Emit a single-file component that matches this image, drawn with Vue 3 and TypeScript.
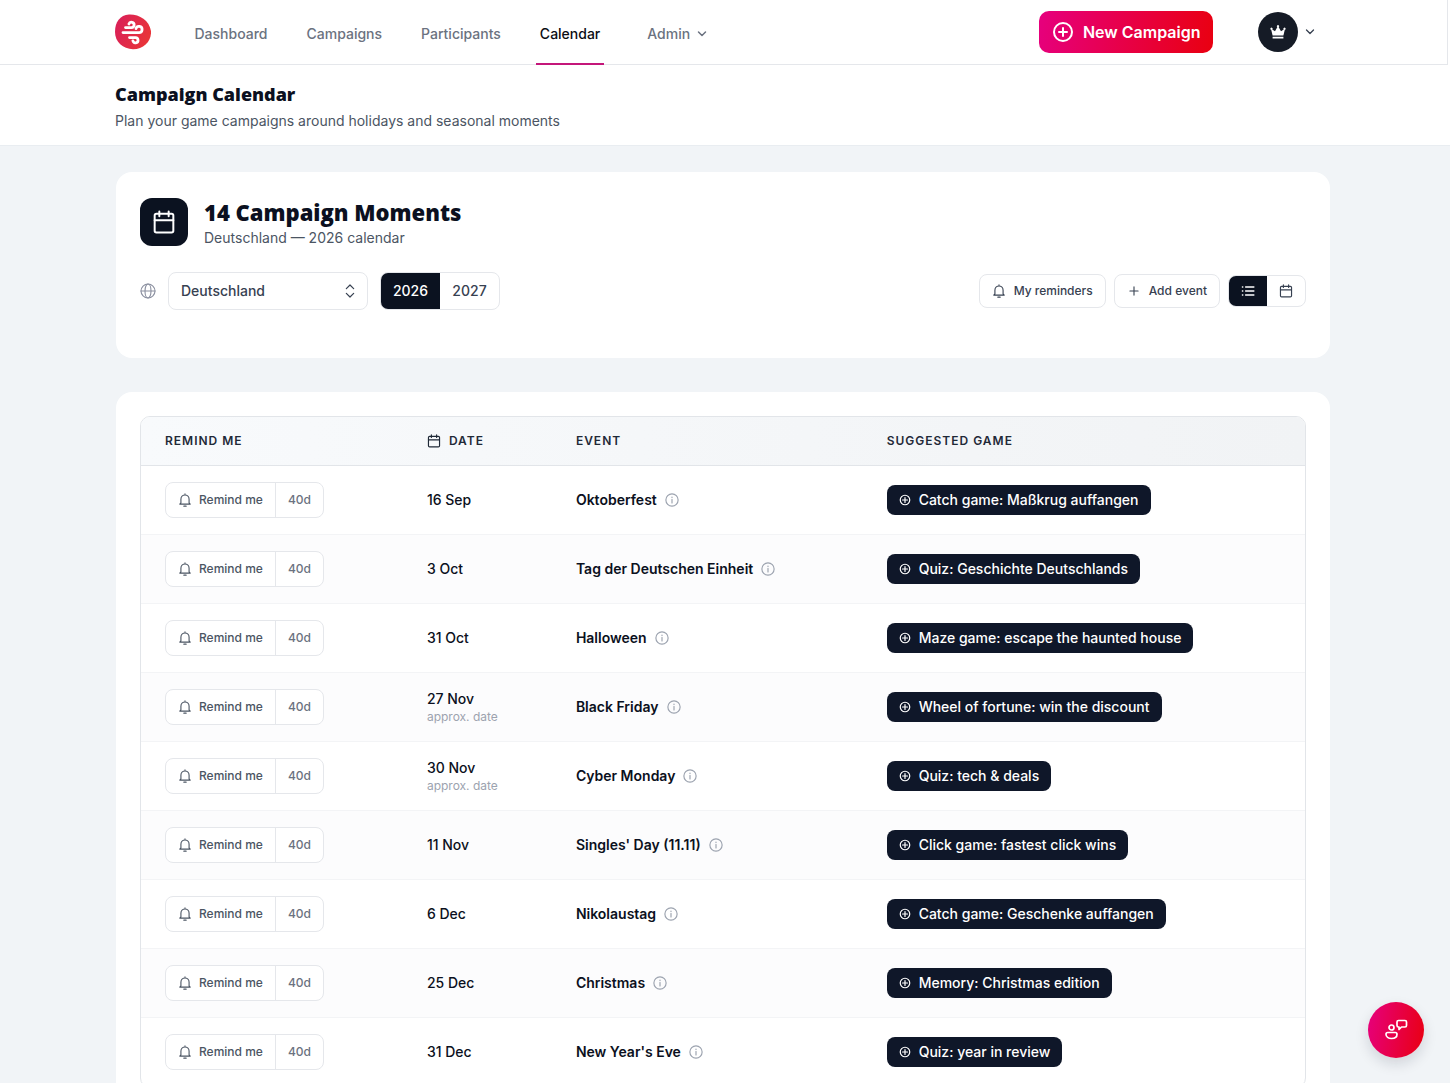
<script setup lang="ts">
import { ref } from 'vue'

interface Moment {
  date: string
  approx?: boolean
  name: string
  game: string
}

const navItems: string[] = ['Dashboard', 'Campaigns', 'Participants', 'Calendar']
const activeNav = 'Calendar'

const country = ref('Deutschland')
const years: number[] = [2026, 2027]
const year = ref(2026)
const view = ref<'list' | 'month'>('list')

const moments: Moment[] = [
  { date: '16 Sep', name: 'Oktoberfest', game: 'Catch game: Maßkrug auffangen' },
  { date: '3 Oct', name: 'Tag der Deutschen Einheit', game: 'Quiz: Geschichte Deutschlands' },
  { date: '31 Oct', name: 'Halloween', game: 'Maze game: escape the haunted house' },
  { date: '27 Nov', approx: true, name: 'Black Friday', game: 'Wheel of fortune: win the discount' },
  { date: '30 Nov', approx: true, name: 'Cyber Monday', game: 'Quiz: tech & deals' },
  { date: '11 Nov', name: "Singles' Day (11.11)", game: 'Click game: fastest click wins' },
  { date: '6 Dec', name: 'Nikolaustag', game: 'Catch game: Geschenke auffangen' },
  { date: '25 Dec', name: 'Christmas', game: 'Memory: Christmas edition' },
  { date: '31 Dec', name: "New Year's Eve", game: 'Quiz: year in review' },
]
</script>

<template>
  <div class="page">
    <header class="topbar">
      <div class="container topbar-inner">
        <a href="#" class="logo" aria-label="Home">
          <svg width="36" height="36" viewBox="0 0 36 36" fill="none">
            <defs>
              <linearGradient id="logo-fill" x1="0" y1="0" x2="1" y2="0.4">
                <stop offset="0" stop-color="#d81e5b" />
                <stop offset="1" stop-color="#e8343a" />
              </linearGradient>
            </defs>
            <path d="M14 .6C24 .2 34 6 36 17c.6 10-7 18-18 18.200C8 35 0 28 0 18 0 8 5 1.200 14 .6Z" fill="url(#logo-fill)" />
            <g stroke="#fff" stroke-width="2.800" stroke-linecap="round" stroke-linejoin="round">
              <path d="M10.500 13.600h6a2.700 2.700 0 1 0-2.600-3.600" />
              <path d="M8 18.600h16a3.100 3.100 0 1 0-3-4" />
              <path d="M14.500 23.600h6a2.600 2.600 0 1 1-2.600 3.200" />
            </g>
          </svg>
        </a>
        <nav class="nav">
          <a
            v-for="item in navItems"
            :key="item"
            href="#"
            class="nav-link"
            :class="{ active: item === activeNav }"
          >{{ item }}</a>
          <button type="button" class="nav-menu">
            Admin
            <svg class="stroke" width="12" height="12" viewBox="0 0 24 24" stroke-width="3"><path d="m5 8 7 7 7-7" /></svg>
          </button>
        </nav>
        <button type="button" class="new-campaign">
          <svg class="stroke" width="24" height="24" viewBox="0 0 24 24" stroke-width="2"><circle cx="12" cy="12" r="9" /><path d="M12 8v8M8 12h8" /></svg>
          New Campaign
        </button>
        <button type="button" class="account" aria-label="Account">
          <span class="avatar">
            <svg width="16" height="14" viewBox="0 0 16 14" fill="#fff"><path d="M2.600 10.600 1.200 4.800a1.100 1.100 0 1 1 1-.2L5 6.200l2.400-4.100a1.100 1.100 0 1 1 1.200 0L11 6.200l2.800-1.600a1.100 1.100 0 1 1 1 .2l-1.400 5.800ZM2.600 11.800h10.800v1.700H2.600Z" /></svg>
          </span>
          <svg class="stroke" width="12" height="12" viewBox="0 0 24 24" stroke-width="2.600"><path d="m5 8 7 7 7-7" /></svg>
        </button>
      </div>
    </header>

    <section class="page-head">
      <div class="container">
        <h1>Campaign Calendar</h1>
        <p>Plan your game campaigns around holidays and seasonal moments</p>
      </div>
    </section>

    <main class="container content">
      <section class="card summary">
        <div class="summary-head">
          <span class="summary-icon">
            <svg class="stroke" width="28" height="28" viewBox="0 0 24 24" stroke-width="1.700"><rect x="4" y="5" width="16" height="16" rx="1.500" /><path d="M4 10.500h16M8 3v4M16 3v4" /></svg>
          </span>
          <div>
            <h2>14 Campaign Moments</h2>
            <p>{{ country }} — {{ year }} calendar</p>
          </div>
        </div>
        <div class="toolbar">
          <label class="globe" for="country" aria-label="Country">
            <svg class="stroke" width="16" height="16" viewBox="0 0 24 24" stroke-width="1.700"><circle cx="12" cy="12" r="10.500" /><ellipse cx="12" cy="12" rx="4.500" ry="10.500" /><path d="M1.500 12h21" /></svg>
          </label>
          <div class="select">
            <select id="country" v-model="country">
              <option>Deutschland</option>
              <option>Österreich</option>
            </select>
            <svg class="stroke" width="16" height="16" viewBox="0 0 24 24" stroke-width="1.800"><path d="m6.500 8.500 5.500-5.500 5.500 5.500M6.500 15.500l5.500 5.500 5.500-5.500" /></svg>
          </div>
          <div class="years">
            <button
              v-for="y in years"
              :key="y"
              type="button"
              :class="{ on: y === year }"
              @click="year = y"
            >{{ y }}</button>
          </div>
          <div class="actions">
            <button type="button" class="action">
              <svg class="stroke" width="14" height="14" viewBox="0 0 24 24" stroke-width="1.900"><path d="M5 17V10.500a7 7 0 0 1 14 0V17l2 2H3ZM12 1.500v2M10 22.500h4" /></svg>
              My reminders
            </button>
            <button type="button" class="action">
              <svg class="stroke" width="14" height="14" viewBox="0 0 24 24" stroke-width="1.900"><path d="M12 5v14M5 12h14" /></svg>
              Add event
            </button>
            <div class="views">
              <button type="button" aria-label="List view" :class="{ on: view === 'list' }" @click="view = 'list'">
                <svg class="stroke" width="14" height="14" viewBox="0 0 24 24" stroke-width="2.600"><path d="M8 5h14M8 12h14M8 19h14M2.500 5h.5M2.500 12h.5M2.500 19h.5" /></svg>
              </button>
              <button type="button" aria-label="Calendar view" :class="{ on: view === 'month' }" @click="view = 'month'">
                <svg class="stroke" width="14" height="14" viewBox="0 0 24 24" stroke-width="2"><rect x="2.500" y="4" width="19" height="18" rx="2" /><path d="M2.500 10h19M7.500 1.500V6M16.500 1.500V6" /></svg>
              </button>
            </div>
          </div>
        </div>
      </section>

      <section class="card listing">
        <div class="table-wrap">
          <table>
            <colgroup>
              <col class="c-remind" />
              <col class="c-date" />
              <col class="c-event" />
              <col />
            </colgroup>
            <thead>
              <tr>
                <th scope="col">Remind me</th>
                <th scope="col">
                  <span class="th-date">
                    <svg class="stroke" width="14" height="14" viewBox="0 0 24 24" stroke-width="2"><rect x="2.500" y="4" width="19" height="18" rx="2" /><path d="M2.500 10h19M7.500 1.500V6M16.500 1.500V6" /></svg>
                    Date
                  </span>
                </th>
                <th scope="col">Event</th>
                <th scope="col">Suggested game</th>
              </tr>
            </thead>
            <tbody>
              <tr v-for="m in moments" :key="m.name">
                <td>
                  <div class="remind">
                    <button type="button" class="remind-main">
                      <svg class="stroke" width="14" height="14" viewBox="0 0 24 24" stroke-width="1.900"><path d="M5 17V10.500a7 7 0 0 1 14 0V17l2 2H3ZM12 1.500v2M10 22.500h4" /></svg>
                      Remind me
                    </button>
                    <button type="button" class="remind-days">40d</button>
                  </div>
                </td>
                <td>
                  <div class="date">{{ m.date }}</div>
                  <div v-if="m.approx" class="approx">approx. date</div>
                </td>
                <td>
                  <div class="event">
                    {{ m.name }}
                    <svg class="stroke" width="14" height="14" viewBox="0 0 24 24" stroke-width="2"><circle cx="12" cy="12" r="10.500" /><path d="M12 11v6M12 7v.5" /></svg>
                  </div>
                </td>
                <td>
                  <button type="button" class="game">
                    <svg class="stroke" width="12" height="12" viewBox="0 0 24 24" stroke-width="2.400"><circle cx="12" cy="12" r="9.500" /><path d="M12 7v10M7 12h10" /></svg>
                    {{ m.game }}
                  </button>
                </td>
              </tr>
            </tbody>
          </table>
        </div>
      </section>
    </main>

    <button type="button" class="fab" aria-label="Support chat">
      <svg class="stroke" width="24" height="24" viewBox="0 0 24 24" stroke-width="1.700"><circle cx="7.500" cy="9.500" r="2.500" /><path d="M2 16.200c0-1 .7-1.700 1.700-1.700h7.600c1 0 1.700.7 1.700 1.700 0 2.800-2.500 4.300-5.500 4.300S2 19 2 16.200ZM14.500 2.500h6.500a1.500 1.500 0 0 1 1.500 1.500v3.500A1.500 1.500 0 0 1 21 9h-3.500L15 11.500V9h-.5A1.500 1.500 0 0 1 13 7.500V4a1.500 1.500 0 0 1 1.500-1.500Z" /></svg>
    </button>
  </div>
</template>

<style>
body {
  margin: 0;
  background: #f1f4f7;
}
</style>

<style scoped>
* {
  box-sizing: border-box;
}

.page {
  height: 100vh;
  overflow-y: auto;
  scrollbar-width: none;
  font-family: Inter, "Liberation Sans", sans-serif;
  font-size: 14px;
  line-height: 20px;
  color: #0b1020;
}

button,
select {
  font: inherit;
  color: inherit;
  margin: 0;
  padding: 0;
  border: 0;
  background: none;
  cursor: pointer;
}

a {
  color: inherit;
  text-decoration: none;
}

h1,
h2,
p {
  margin: 0;
}

svg {
  display: block;
  flex: none;
}

.stroke {
  fill: none;
  stroke: currentColor;
  stroke-linecap: round;
  stroke-linejoin: round;
}

.container {
  max-width: 1280px;
  margin: 0 auto;
  padding: 0 32px;
}

.topbar {
  margin-right: 2px;
  padding-right: 2px;
  background: #fff;
  border-right: 1px solid #e5e7eb;
  border-bottom: 1px solid #e5e7eb;
  box-shadow: 2px 0 0 #fff;
}

.topbar-inner {
  display: flex;
  align-items: center;
  height: 64px;
}

.logo {
  margin-right: 40px;
}

.nav {
  display: flex;
  align-self: stretch;
  gap: 31px;
  margin-right: auto;
  font-weight: 500;
  color: #6b7280;
}

.nav-link,
.nav-menu {
  display: flex;
  align-items: center;
  padding: 5px 4px 0;
  height: 65px;
  border-bottom: 2px solid transparent;
}

.nav-link.active {
  color: #0b0d14;
  border-color: #c4167a;
}

.nav-menu {
  gap: 6px;
  padding-left: 12px;
}

.new-campaign {
  display: flex;
  align-items: center;
  gap: 8px;
  height: 42px;
  padding: 0 12px;
  border-radius: 10px;
  background: linear-gradient(100deg, #e6007e, #e90010);
  color: #fff;
  font-size: 16px;
  font-weight: 600;
}

.account {
  display: flex;
  align-items: center;
  gap: 6px;
  margin: 0 15px 0 45px;
  color: #374151;
}

.avatar {
  display: grid;
  place-items: center;
  width: 40px;
  height: 40px;
  border-radius: 50%;
  background: #151b26;
}

.page-head {
  padding: 17px 4px 14px 0;
  background: #fff;
  border-bottom: 1px solid #e9edf1;
}

h1,
h2 {
  font-family: "Open Sans", Inter, sans-serif;
  font-weight: 800;
}

h1 {
  font-size: 18px;
  line-height: 24px;
}

.page-head p {
  margin-top: 5px;
  color: #4b5563;
}

.content {
  max-width: 1282px;
  padding: 26px 36px 26px 32px;
}

.card {
  padding: 24px;
  border-radius: 16px;
  background: #fff;
}

.summary {
  padding-bottom: 48px;
  margin-bottom: 34px;
}

.summary-head {
  display: flex;
  align-items: center;
  gap: 16px;
  margin-bottom: 24px;
}

.summary-icon {
  display: grid;
  place-items: center;
  width: 48px;
  height: 48px;
  border-radius: 12px;
  background: #0b1220;
  color: #fff;
}

h2 {
  font-size: 22px;
  line-height: 32px;
}

.summary-head p {
  color: #4b5563;
}

.toolbar {
  display: flex;
  align-items: center;
  color: #374151;
}

.globe {
  margin-right: 12px;
  color: #8b90a0;
}

.select {
  position: relative;
  margin-right: 12px;
}

.select select {
  width: 200px;
  height: 38px;
  padding: 0 12px;
  border: 1px solid #e5e7eb;
  border-radius: 8px;
  background: #fff;
  appearance: none;
  font-weight: 500;
}

.select svg {
  position: absolute;
  right: 10px;
  top: 11px;
  pointer-events: none;
}

.years,
.views {
  display: flex;
  overflow: hidden;
  border: 1px solid #e5e7eb;
  border-radius: 8px;
}

.years button {
  width: 59px;
  height: 36px;
  font-weight: 500;
}

.years .on,
.views .on {
  background: #0b1220;
  color: #fff;
}

.actions {
  display: flex;
  align-items: center;
  gap: 8px;
  margin-left: auto;
}

.action {
  display: flex;
  align-items: center;
  gap: 8px;
  height: 34px;
  padding: 0 12px;
  border: 1px solid #e5e7eb;
  border-radius: 8px;
  font-size: 12px;
  font-weight: 500;
}

.views button {
  display: grid;
  place-items: center;
  width: 38px;
  height: 30px;
}

.table-wrap {
  overflow: hidden;
  border: 1px solid #e2e5e9;
  border-radius: 10px;
}

table {
  width: 100%;
  table-layout: fixed;
  border-collapse: separate;
  border-spacing: 0;
}

.c-remind {
  width: 22.5%;
}

.c-date {
  width: 12.8%;
}

.c-event {
  width: 26.7%;
}

thead tr {
  background: linear-gradient(90deg, #f8fafc, #f1f3f5);
}

th {
  height: 49px;
  padding: 0 24px;
  border-bottom: 1px solid #e2e5e9;
  text-align: left;
  font-size: 12px;
  font-weight: 600;
  letter-spacing: 1px;
  text-transform: uppercase;
  color: #1f2937;
}

.th-date {
  display: flex;
  align-items: center;
  gap: 8px;
}

td {
  height: 69px;
  padding: 0 24px;
  border-bottom: 1px solid #f3f4f6;
}

tbody tr:nth-child(even) {
  background: #fcfcfd;
}

.remind {
  display: inline-flex;
  overflow: hidden;
  height: 36px;
  border: 1px solid #e5e7eb;
  border-radius: 8px;
  background: #fff;
  vertical-align: middle;
  font-size: 12px;
  font-weight: 500;
  color: #4b5563;
}

.remind-main {
  display: flex;
  align-items: center;
  gap: 7px;
  padding: 0 12px;
}

.remind-days {
  padding: 0 12px;
  border-left: 1px solid #e5e7eb;
  color: #6b7280;
}

.date {
  font-weight: 500;
}

.approx {
  font-size: 12px;
  line-height: 16px;
  color: #9ca3af;
}

.event {
  display: flex;
  align-items: center;
  gap: 8px;
  font-weight: 600;
}

.event svg {
  color: #9ca3af;
}

.game {
  display: inline-flex;
  align-items: center;
  gap: 8px;
  height: 30px;
  padding: 0 12px;
  border-radius: 8px;
  background: #0f1729;
  color: #fff;
  font-weight: 500;
  vertical-align: middle;
}

.fab {
  position: fixed;
  right: 26px;
  bottom: 25px;
  display: grid;
  place-items: center;
  width: 56px;
  height: 56px;
  border-radius: 50%;
  background: linear-gradient(100deg, #e6007e, #e90010);
  color: #fff;
  box-shadow: 0 6px 14px rgba(15, 23, 42, 0.14);
}
</style>
